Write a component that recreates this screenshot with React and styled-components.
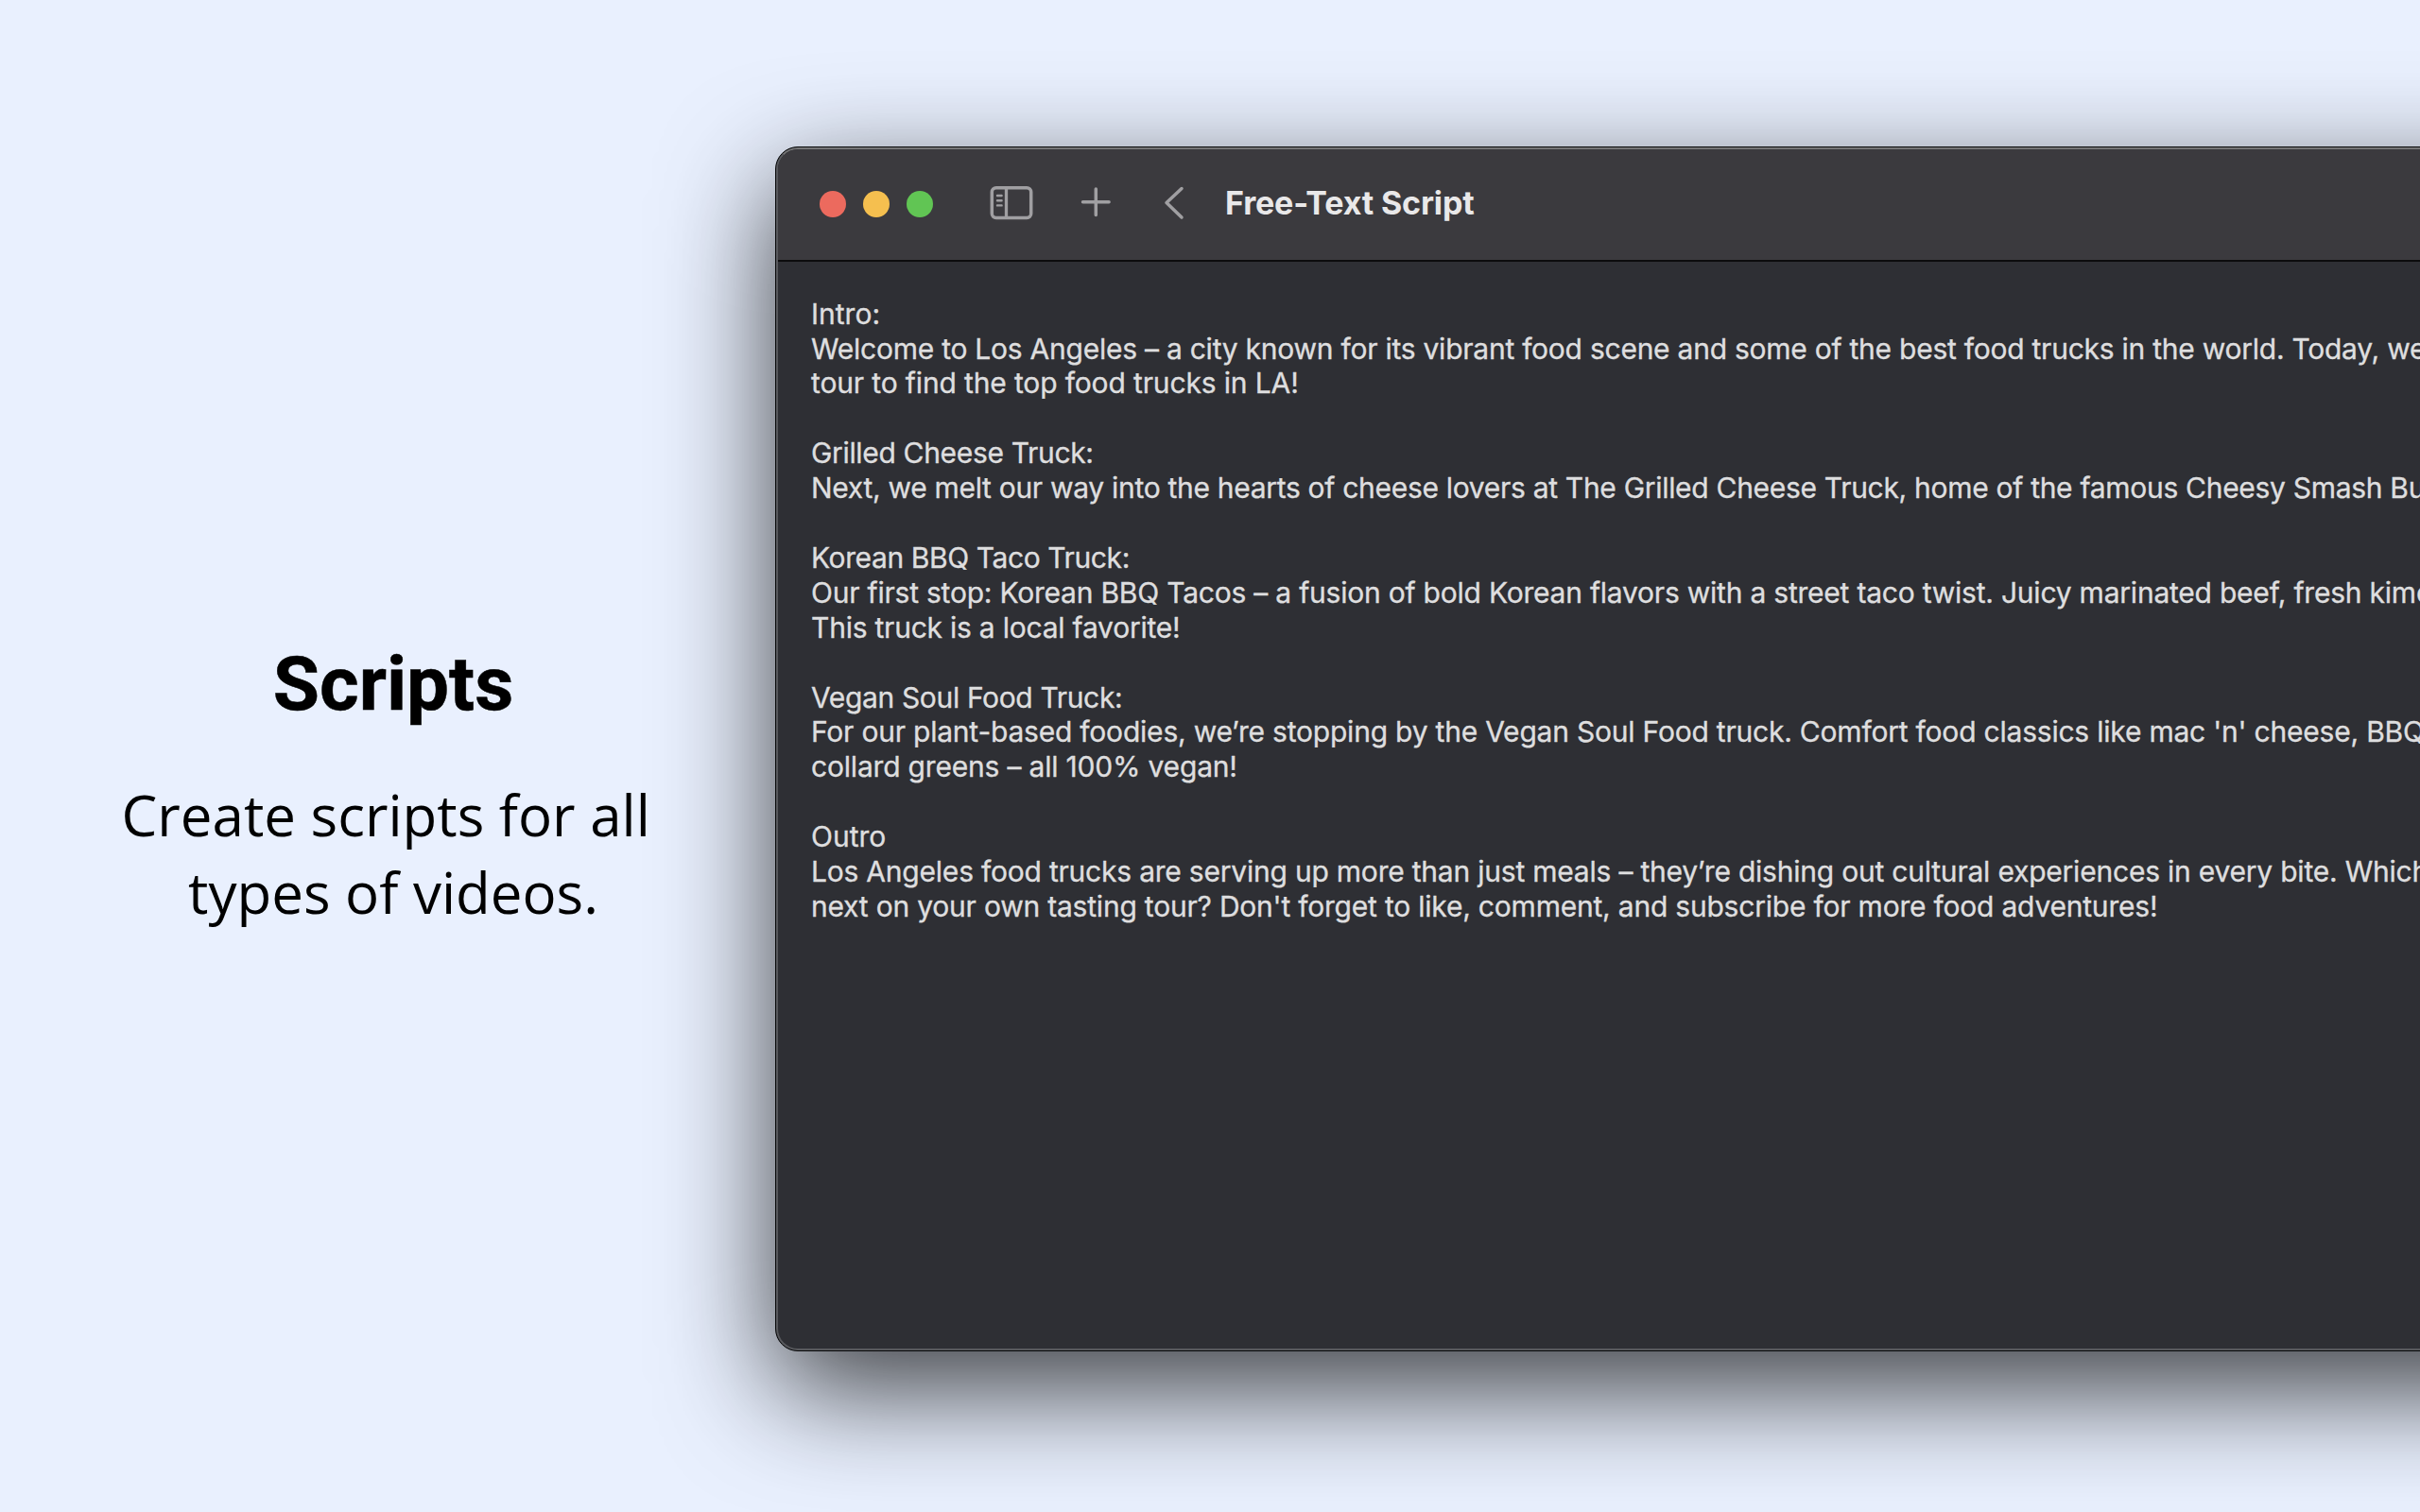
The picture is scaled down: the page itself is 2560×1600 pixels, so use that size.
import React from "react";
import styled, { createGlobalStyle } from "styled-components";

const Global = createGlobalStyle`
  * { box-sizing: border-box; }
  html, body { margin: 0; background: #e9f0fe; }
`;

const Stage = styled.main`
  display: flex;
  width: 2560px;
  height: 1600px;
  overflow: hidden;
  background: #e9f0fe;
  color: #000;
`;

const Caption = styled.section`
  flex: none;
  width: 820px;
  padding: 677px 0 0 12px;
  display: flex;
  flex-direction: column;
  gap: 50px;
  text-align: center;
`;

const Heading = styled.h1`
  margin: 0;
  font: 700 80px/94px Roboto, sans-serif;
  -webkit-text-stroke: 0.5px #000;
`;

const Tagline = styled.p`
  margin: 0;
  font: 400 60px/82px "Open Sans", sans-serif;
  white-space: pre;
`;

const Window = styled.section`
  flex: none;
  width: 2000px;
  height: 1275px;
  margin-top: 155px;
  display: flex;
  flex-direction: column;
  border: 1px solid #08090a;
  border-radius: 24px;
  overflow: hidden;
  background: #2e2f34;
  box-shadow: 0 40px 118px rgba(0, 0, 0, 0.74);
`;

const Frame = styled.div`
  flex: 1;
  display: flex;
  flex-direction: column;
  border: 2px solid #58595d;
  border-top-color: #767677;
  border-radius: 23px;
  overflow: hidden;
`;

const TitleBar = styled.header`
  flex: none;
  height: 119px;
  padding: 0 0 3px 44px;
  display: flex;
  align-items: center;
  background: #3b3a3e;
  border-bottom: 2px solid #0c0c0d;
`;

const Lights = styled.div`
  display: flex;
  gap: 18px;
  margin: 1px 60px 0 0;
`;

const Light = styled.span`
  width: 28px;
  height: 28px;
  border-radius: 50%;
  background: ${(p) => p.$color};
`;

const Icon = styled.svg`
  flex: none;
  display: block;
  fill: none;
  stroke: #a09fa2;
  stroke-linecap: round;
  stroke-linejoin: round;
  margin-right: ${(p) => p.$gap}px;
`;

const Title = styled.h2`
  margin: 0;
  font: 700 34px/40px Inter, sans-serif;
  letter-spacing: -0.15px;
  color: #e9e8e9;
`;

const Script = styled.div`
  padding: 36.6px 0 0 35px;
  display: flex;
  flex-direction: column;
  gap: 36.9px;
  font: 400 30px/36.9px Inter, sans-serif;
  -webkit-text-stroke: 0.35px #dededf;
  color: #dededf;
`;

const Block = styled.div`
  display: flex;
  flex-direction: column;
`;

const Line = styled.span`
  white-space: nowrap;
  letter-spacing: ${(p) => p.$track}px;
`;

const lights = ["#ec6a5e", "#f5bf4f", "#61c554"];

const script = [
  [
    ["Intro:", 0],
    ["Welcome to Los Angeles – a city known for its vibrant food scene and some of the best food trucks in the world. Today, we", -0.246],
    ["tour to find the top food trucks in LA!", -0.14],
  ],
  [
    ["Grilled Cheese Truck:", -0.33],
    ["Next, we melt our way into the hearts of cheese lovers at The Grilled Cheese Truck, home of the famous Cheesy Smash Bu", -0.3],
  ],
  [
    ["Korean BBQ Taco Truck:", -0.4],
    ["Our first stop: Korean BBQ Tacos – a fusion of bold Korean flavors with a street taco twist. Juicy marinated beef, fresh kimc", -0.22],
    ["This truck is a local favorite!", -0.23],
  ],
  [
    ["Vegan Soul Food Truck:", -0.35],
    ["For our plant-based foodies, we’re stopping by the Vegan Soul Food truck. Comfort food classics like mac 'n' cheese, BBQ", -0.212],
    ["collard greens – all 100% vegan!", -0.19],
  ],
  [
    ["Outro", 0],
    ["Los Angeles food trucks are serving up more than just meals – they’re dishing out cultural experiences in every bite. Which", -0.215],
    ["next on your own tasting tour? Don't forget to like, comment, and subscribe for more food adventures!", -0.21],
  ],
];

const SidebarIcon = () => (
  <Icon width="46" height="38" viewBox="0 0 46 38" $gap={49}>
    <rect x="2.3" y="2.7" width="41.4" height="31.8" rx="4.5" strokeWidth="3.5" />
    <path d="M17.5 3v31" strokeWidth="3.3" strokeLinecap="butt" />
    <path d="M8 11h4.6M8 16.2h4.6M8 21.4h4.6" strokeWidth="2.4" />
  </Icon>
);

const PlusIcon = () => (
  <Icon width="34" height="34" viewBox="0 0 34 34" strokeWidth="3.5" $gap={55}>
    <path d="M17.3 1.9v27.6M3.5 15.7h27.6" />
  </Icon>
);

const BackIcon = () => (
  <Icon width="22" height="36" viewBox="0 0 22 36" strokeWidth="3.5" $gap={43}>
    <path d="M19 2.5 3 17.5 19 33" />
  </Icon>
);

export default function App() {
  return (
    <>
      <Global />
      <Stage>
        <Caption>
          <Heading>Scripts</Heading>
          <Tagline>{"Create scripts for all \ntypes of videos."}</Tagline>
        </Caption>
        <Window>
          <Frame>
            <TitleBar>
              <Lights>
                {lights.map((c) => (
                  <Light key={c} $color={c} />
                ))}
              </Lights>
              <SidebarIcon />
              <PlusIcon />
              <BackIcon />
              <Title>Free-Text Script</Title>
            </TitleBar>
            <Script>
              {script.map((block) => (
                <Block key={block[0][0]}>
                  {block.map(([text, track]) => (
                    <Line key={text} $track={track}>
                      {text}
                    </Line>
                  ))}
                </Block>
              ))}
            </Script>
          </Frame>
        </Window>
      </Stage>
    </>
  );
}
